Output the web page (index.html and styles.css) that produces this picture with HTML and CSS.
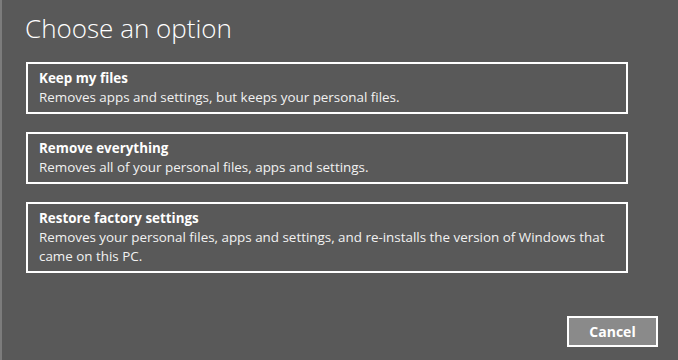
FILE: index.html
```html
<!DOCTYPE html>
<html>
<head>
<meta charset="utf-8">
<link rel="stylesheet" href="styles.css">
</head>
<body>
<div class="page">
  <h1 class="title">Choose an option</h1>
  <div class="options">
    <div class="option">
      <div class="opt-title">Keep my files</div>
      <div class="opt-desc">Removes apps and settings, but keeps your personal files.</div>
    </div>
    <div class="option">
      <div class="opt-title">Remove everything</div>
      <div class="opt-desc">Removes all of your personal files, apps and settings.</div>
    </div>
    <div class="option">
      <div class="opt-title">Restore factory settings</div>
      <div class="opt-desc">Removes your personal files, apps and settings, and re-installs the version of Windows that came on this PC.</div>
    </div>
  </div>
  <div class="actions">
    <button class="cancel">Cancel</button>
  </div>
</div>
</body>
</html>
```
FILE: styles.css
```css
html, body {
  margin: 0;
  padding: 0;
  height: 100%;
}
body {
  background: #595959;
  font-family: "Open Sans", "Noto Sans", sans-serif;
  color: #ffffff;
}
.page {
  box-sizing: border-box;
  height: 360px;
  border-left: 2px solid #7c7c7c;
  padding: 0 20px 0 24px;
  display: flex;
  flex-direction: column;
}
.title {
  margin: 11px 0 0 -1px;
  font-size: 26px;
  font-weight: 300;
  line-height: 34px;
  color: #ffffff;
}
.options {
  margin-top: 17px;
  width: 602px;
  display: flex;
  flex-direction: column;
  gap: 18px;
}
.option {
  border: 2px solid #ffffff;
  padding: 5px 11px 5px;
}
.opt-title {
  font-size: 13.4px;
  font-weight: 700;
  line-height: 19px;
}
.opt-desc {
  font-size: 13.4px;
  line-height: 19px;
  color: #f2f2f2;
}
.actions {
  margin-top: 43px;
  display: flex;
  justify-content: flex-end;
}
.cancel {
  width: 91px;
  height: 31px;
  box-sizing: border-box;
  border: 2px solid #ffffff;
  background: #8a8a8a;
  color: #ffffff;
  font-family: "Open Sans", "Noto Sans", sans-serif;
  font-size: 14px;
  font-weight: 700;
  padding: 0;
}
```
